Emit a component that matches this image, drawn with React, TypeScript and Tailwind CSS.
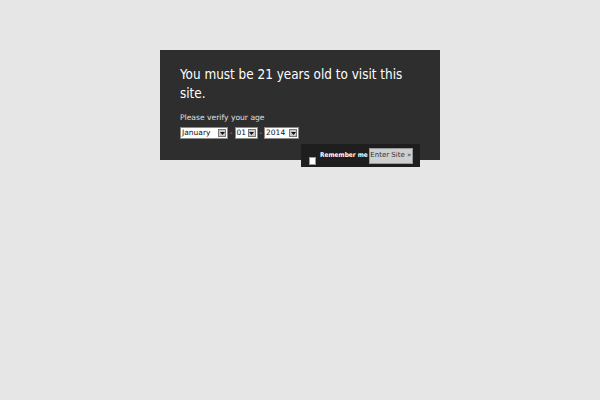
import React from "react";

function FakeSelect({ value, width }: { value: string; width: number }) {
  return (
    <div
      className="flex h-[12px] items-stretch border border-[#8a8a8a] bg-white"
      style={{ width }}
    >
      <div className="flex-1 pl-[1px] text-[7.5px] leading-[10px] text-[#111]">{value}</div>
      <div className="my-[1px] mr-[1px] flex w-[8px] items-center justify-center border border-[#777] bg-[#c8c8c8]">
        <svg width="5" height="3" viewBox="0 0 5 3">
          <path d="M0 0 L5 0 L2.5 3 Z" fill="#111" />
        </svg>
      </div>
    </div>
  );
}

export default function App() {
  return (
    <div
      className="flex h-[400px] w-[600px] justify-center bg-[#e6e6e6] pt-[50px]"
      style={{ fontFamily: '"DejaVu Sans", sans-serif' }}
    >
      <div className="relative h-[110px] w-[280px] bg-[#2e2e2e] px-[20px] pt-[15px]">
        <h1
          className="text-[13.4px] font-normal leading-[19px] text-white"
          style={{ fontFamily: '"DejaVu Sans Condensed", "DejaVu Sans", sans-serif' }}
        >
          You must be 21 years old to visit this site.
        </h1>
        <p className="mt-[10px] whitespace-nowrap text-[7.6px] leading-[10px] text-[#e0e0e0]">
          Please verify your age
        </p>
        <div className="mt-[4px] flex items-center gap-[2px] text-[7px] text-[#bbb]">
          <FakeSelect value="January" width={48} />
          <span>-</span>
          <FakeSelect value="01" width={23} />
          <span>-</span>
          <FakeSelect value="2014" width={35} />
        </div>
        <div className="absolute right-[20px] top-[94px] flex h-[23px] w-[119px] items-center bg-[#1e1e1e] pl-[8px]">
          <div className="mt-[11px] h-[8px] w-[7px] shrink-0 border border-[#999] bg-white" />
          <span
            className="ml-[4px] whitespace-nowrap text-[6.5px] font-bold text-white"
            style={{ fontFamily: '"DejaVu Sans Condensed", "DejaVu Sans", sans-serif' }}
          >
            Remember me
          </span>
          <div className="ml-[1px] flex h-[16px] w-[44px] shrink-0 items-center justify-center whitespace-nowrap border border-[#999] bg-[#cfcfcf] text-[7px] text-[#333]">
            Enter Site »
          </div>
        </div>
      </div>
    </div>
  );
}
